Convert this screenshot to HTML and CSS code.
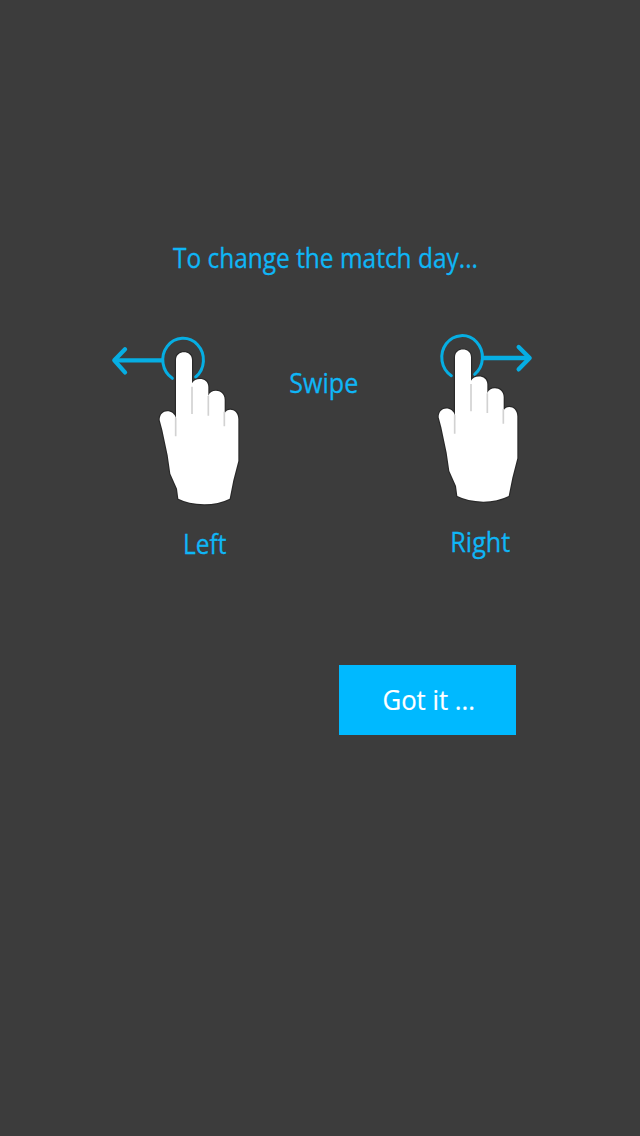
FILE: index.html
```html
<!DOCTYPE html>
<html lang="en">
<head>
<meta charset="utf-8">
<title>Match day help</title>
<link rel="stylesheet" href="styles.css">
</head>
<body>
<main class="overlay">
  <svg class="title" viewBox="0 0 325 45"><text class="label" x="8" y="32.6" textLength="305" lengthAdjust="spacingAndGlyphs">To change the match day...</text></svg>
  <div class="gestures">
    <div class="gesture left">
      <svg class="hand-left" viewBox="0 0 480 570">
        <path class="ring" d="M217 160A61 65 0 1 1 287 156"/>
        <path class="arrow" d="M190 106H45"/>
        <path class="head" d="M75 73L43 106L75 142"/>
        <g id="hand">
          <path class="palm" d="M228 280V105C228 74 276 74 276 105V175C285 156 325 157 325 186V212C332 190 374 192 374 224V264C383 246 415 252 415 282V408L400 466L389 521Q355 538 313 538Q264 536 235 521L231 491L211 446L203 391L187 315L179 285C179 249 222 252 228 280Z"/>
          <path class="crease" d="M227 278V334M276 185V267M325 213V272M373 260V304"/>
        </g>
      </svg>
      <svg class="caption" viewBox="0 0 160 50"><text class="label" x="83" y="38.8" textLength="43.5" lengthAdjust="spacingAndGlyphs">Left</text></svg>
    </div>
    <svg class="swipe" viewBox="0 0 90 45"><text class="label" x="9.3" y="33.2" textLength="69" lengthAdjust="spacingAndGlyphs">Swipe</text></svg>
    <div class="gesture right">
      <svg class="hand-right" viewBox="0 0 360 570">
        <path class="ring" d="M79 152A61 65 0 1 1 149 148"/>
        <path class="arrow" d="M174 99H313"/>
        <path class="head" d="M281 66L314 99L281 133"/>
        <use href="#hand" x="-138" y="-8"/>
      </svg>
      <svg class="caption" viewBox="0 0 120 50"><text class="label" x="25.3" y="37.2" textLength="60" lengthAdjust="spacingAndGlyphs">Right</text></svg>
    </div>
  </div>
  <button class="confirm"><svg class="confirm-text" viewBox="0 0 177 70"><text class="label" x="43.5" y="45.3" textLength="92.5" lengthAdjust="spacingAndGlyphs">Got it ...</text></svg></button>
</main>
</body>
</html>
```
FILE: styles.css
```css
body {
  margin: 0;
  background: #3c3c3c;
}
.overlay {
  display: flex;
  flex-direction: column;
  box-sizing: border-box;
  height: 1136px;
  padding-top: 235px;
}
svg {
  display: block;
  overflow: visible;
}
.label {
  font: 400 28px "Open Sans", "Noto Sans", sans-serif;
  fill: #0fb6f6;
  stroke: #0fb6f6;
  stroke-width: 0.3;
}
.title {
  width: 325px;
  height: 45px;
  margin-left: 165px;
}
.gestures {
  display: flex;
  margin: 45px 0 0 100px;
}
.left { width: 160px; }
.right { width: 120px; margin-left: 55px; }
.swipe {
  width: 90px;
  height: 45px;
  margin: 35px 0 0 20px;
}
.hand-left { width: 160px; height: 190px; }
.hand-right { width: 120px; height: 190px; }
.caption { width: 100%; height: 50px; }
.ring, .arrow, .head {
  fill: none;
  stroke: #06aee3;
  stroke-width: 9;
  stroke-linecap: round;
  stroke-linejoin: round;
}
.arrow { stroke-width: 13; stroke-linecap: butt; }
.head { stroke-width: 13; }
.palm {
  fill: #fff;
  stroke: #292929;
  stroke-width: 7;
  paint-order: stroke;
}
.crease {
  fill: none;
  stroke: #d2d2d2;
  stroke-width: 5;
}
.confirm {
  width: 177px;
  height: 70px;
  margin: 100px 0 0 339px;
  padding: 0;
  border: 0;
  background: #00b9ff;
}
.confirm-text { width: 177px; height: 70px; }
.confirm .label { fill: #fff; stroke: #fff; stroke-width: 0.2; }
```
